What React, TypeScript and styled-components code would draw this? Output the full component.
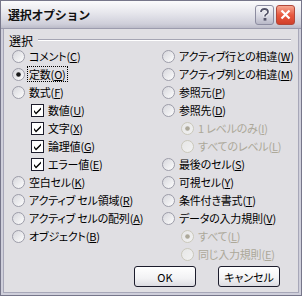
import React from "react";
import styled, { createGlobalStyle } from "styled-components";

const Global = createGlobalStyle`
  html, body { margin: 0; padding: 0; background: #e0dfe3; }
  body { font-family: "Noto Sans CJK JP", "Liberation Sans", sans-serif; }
`;

const Window = styled.div`
  width: 302px;
  height: 296px;
  box-sizing: border-box;
  background: #e0dfe3;
  border: 1px solid #76768a;
  display: flex;
  flex-direction: column;
  overflow: hidden;
`;

const TitleBar = styled.div`
  height: 27px;
  display: flex;
  align-items: center;
  padding: 0 6px 0 7px;
  background: linear-gradient(#fbfbfc, #e6e6ec 45%, #cfcfda 85%, #bcbcc9);
  border-bottom: 1px solid #9c9cae;
`;

const Title = styled.div`
  flex: 1;
  font-size: 12px;
  font-weight: bold;
  color: #101010;
  letter-spacing: -0.3px;
`;

const CapButton = styled.div<{ $close?: boolean }>`
  width: 19px;
  height: 20px;
  margin-left: 2px;
  border-radius: 3px;
  box-sizing: border-box;
  display: flex;
  align-items: center;
  justify-content: center;
  border: 1px solid ${(p) => (p.$close ? "#b0483a" : "#8c8ca0")};
  background: ${(p) =>
    p.$close
      ? "linear-gradient(#f6a892, #e8583f 50%, #d2402a)"
      : "linear-gradient(#f7f7fa, #d8d8e2 55%, #b9b9c8)"};
`;

const Frame = styled.div`
  flex: 1;
  display: flex;
  flex-direction: column;
  border-left: 2px solid #cfcfdb;
  border-right: 2px solid #cfcfdb;
  border-bottom: 2px solid #cfcfdb;
  box-shadow: inset 1px 0 #a7a7b8, inset -1px 0 #a7a7b8, inset 0 -1px #a7a7b8;
  padding: 4px 8px 0 9px;
`;

const GroupHead = styled.div`
  display: flex;
  align-items: center;
  height: 14px;
  font-size: 12px;
  color: #000;
  margin-left: -3px;
`;

const GroupLine = styled.div`
  flex: 1;
  margin-left: 5px;
  height: 0;
  border-top: 1px solid #a5a5b3;
  border-bottom: 1px solid #fff;
`;

const Columns = styled.div`
  display: grid;
  grid-template-columns: 150px 1fr;
`;

const Col = styled.div`
  display: flex;
  flex-direction: column;
`;

const Row = styled.div<{ $indent?: boolean; $disabled?: boolean }>`
  height: 18px;
  display: flex;
  align-items: center;
  padding-left: ${(p) => (p.$indent ? 19 : 0)}px;
  font-size: 11px;
  letter-spacing: -0.2px;
  font-feature-settings: "palt";
  color: ${(p) => (p.$disabled ? "#aca899" : "#000")};
  white-space: nowrap;
`;

const Label = styled.span<{ $focus?: boolean }>`
  margin-left: 3px;
  padding: 0 1px;
  line-height: 14px;
  outline: ${(p) => (p.$focus ? "1px dotted #000" : "none")};
`;

const Mn = styled.span`
  text-decoration: underline;
  text-underline-offset: 1px;
`;

const Footer = styled.div`
  display: flex;
  justify-content: flex-end;
  gap: 22px;
  margin-top: 3px;
  padding-right: 11px;
`;

const Button = styled.div`
  width: 62px;
  height: 21px;
  box-sizing: border-box;
  border: 1px solid #1c1c2c;
  border-radius: 3px;
  background: linear-gradient(#ffffff, #f2f2f4 60%, #dcdce2);
  display: flex;
  align-items: center;
  justify-content: center;
  font-size: 11px;
  font-feature-settings: "palt";
  color: #000;
`;

function Radio({ checked, disabled }: { checked?: boolean; disabled?: boolean }) {
  const id = disabled ? "rgd" : "rg";
  return (
    <svg width="13" height="13" viewBox="0 0 13 13">
      <defs>
        <linearGradient id={id} x1="0" y1="0" x2="1" y2="1">
          <stop offset="0" stopColor={disabled ? "#e6e6e6" : "#d4d4da"} />
          <stop offset="1" stopColor={disabled ? "#f2f2f2" : "#ffffff"} />
        </linearGradient>
      </defs>
      <circle cx="6.5" cy="6.5" r="6" fill={`url(#${id})`} stroke={disabled ? "#c9c7ba" : "#9c9ca8"} strokeWidth="1" />
      {checked && <circle cx="6.5" cy="6.5" r="2.3" fill={disabled ? "#aca899" : "#1a1a1a"} />}
    </svg>
  );
}

function Check() {
  return (
    <svg width="13" height="13" viewBox="0 0 13 13">
      <rect x="0.5" y="0.5" width="12" height="12" fill="#fff" stroke="#1c1c2c" />
      <path d="M3 6 L5 8.5 L10 3.5 L10 5.5 L5 10.5 L3 8 Z" fill="#000" />
    </svg>
  );
}

type Item = {
  text: string;
  mn: string;
  kind?: "radio" | "check";
  checked?: boolean;
  indent?: boolean;
  disabled?: boolean;
  focus?: boolean;
};

const left: Item[] = [
  { text: "コメント", mn: "C" },
  { text: "定数", mn: "O", checked: true, focus: true },
  { text: "数式", mn: "F" },
  { text: "数値", mn: "U", kind: "check", indent: true },
  { text: "文字", mn: "X", kind: "check", indent: true },
  { text: "論理値", mn: "G", kind: "check", indent: true },
  { text: "エラー値", mn: "E", kind: "check", indent: true },
  { text: "空白セル", mn: "K" },
  { text: "アクティブ セル領域", mn: "R" },
  { text: "アクティブ セルの配列", mn: "A" },
  { text: "オブジェクト", mn: "B" },
];

const right: Item[] = [
  { text: "アクティブ行との相違", mn: "W" },
  { text: "アクティブ列との相違", mn: "M" },
  { text: "参照元", mn: "P" },
  { text: "参照先", mn: "D" },
  { text: "1 レベルのみ", mn: "I", indent: true, disabled: true, checked: true },
  { text: "すべてのレベル", mn: "L", indent: true, disabled: true },
  { text: "最後のセル", mn: "S" },
  { text: "可視セル", mn: "Y" },
  { text: "条件付き書式", mn: "T" },
  { text: "データの入力規則", mn: "V" },
  { text: "すべて", mn: "L", indent: true, disabled: true, checked: true },
  { text: "同じ入力規則", mn: "E", indent: true, disabled: true },
];

function Option({ item }: { item: Item }) {
  return (
    <Row $indent={item.indent} $disabled={item.disabled}>
      {item.kind === "check" ? <Check /> : <Radio checked={item.checked} disabled={item.disabled} />}
      <Label $focus={item.focus}>
        {item.text}(<Mn>{item.mn}</Mn>)
      </Label>
    </Row>
  );
}

export default function App() {
  return (
    <>
      <Global />
      <Window>
        <TitleBar>
          <Title>選択オプション</Title>
          <CapButton>
            <svg width="11" height="13" viewBox="0 0 11 13">
              <path
                d="M2 4 Q2 1 5.5 1 Q9 1 9 4 Q9 5.5 7 6.5 Q6 7 6 8.5"
                fill="none"
                stroke="#fff"
                strokeWidth="3.4"
              />
              <path
                d="M2 4 Q2 1 5.5 1 Q9 1 9 4 Q9 5.5 7 6.5 Q6 7 6 8.5"
                fill="none"
                stroke="#55556a"
                strokeWidth="1.8"
              />
              <rect x="4.6" y="10" width="2.8" height="2.6" fill="#55556a" />
            </svg>
          </CapButton>
          <CapButton $close>
            <svg width="11" height="11" viewBox="0 0 11 11">
              <path d="M1.5 1.5 L9.5 9.5 M9.5 1.5 L1.5 9.5" stroke="#fff" strokeWidth="2.2" />
            </svg>
          </CapButton>
        </TitleBar>
        <Frame>
          <GroupHead>
            選択
            <GroupLine />
          </GroupHead>
          <Columns>
            <Col>
              {left.map((it) => (
                <Option key={it.text} item={it} />
              ))}
            </Col>
            <Col>
              {right.map((it) => (
                <Option key={it.text} item={it} />
              ))}
            </Col>
          </Columns>
          <Footer>
            <Button>OK</Button>
            <Button>キャンセル</Button>
          </Footer>
        </Frame>
      </Window>
    </>
  );
}
